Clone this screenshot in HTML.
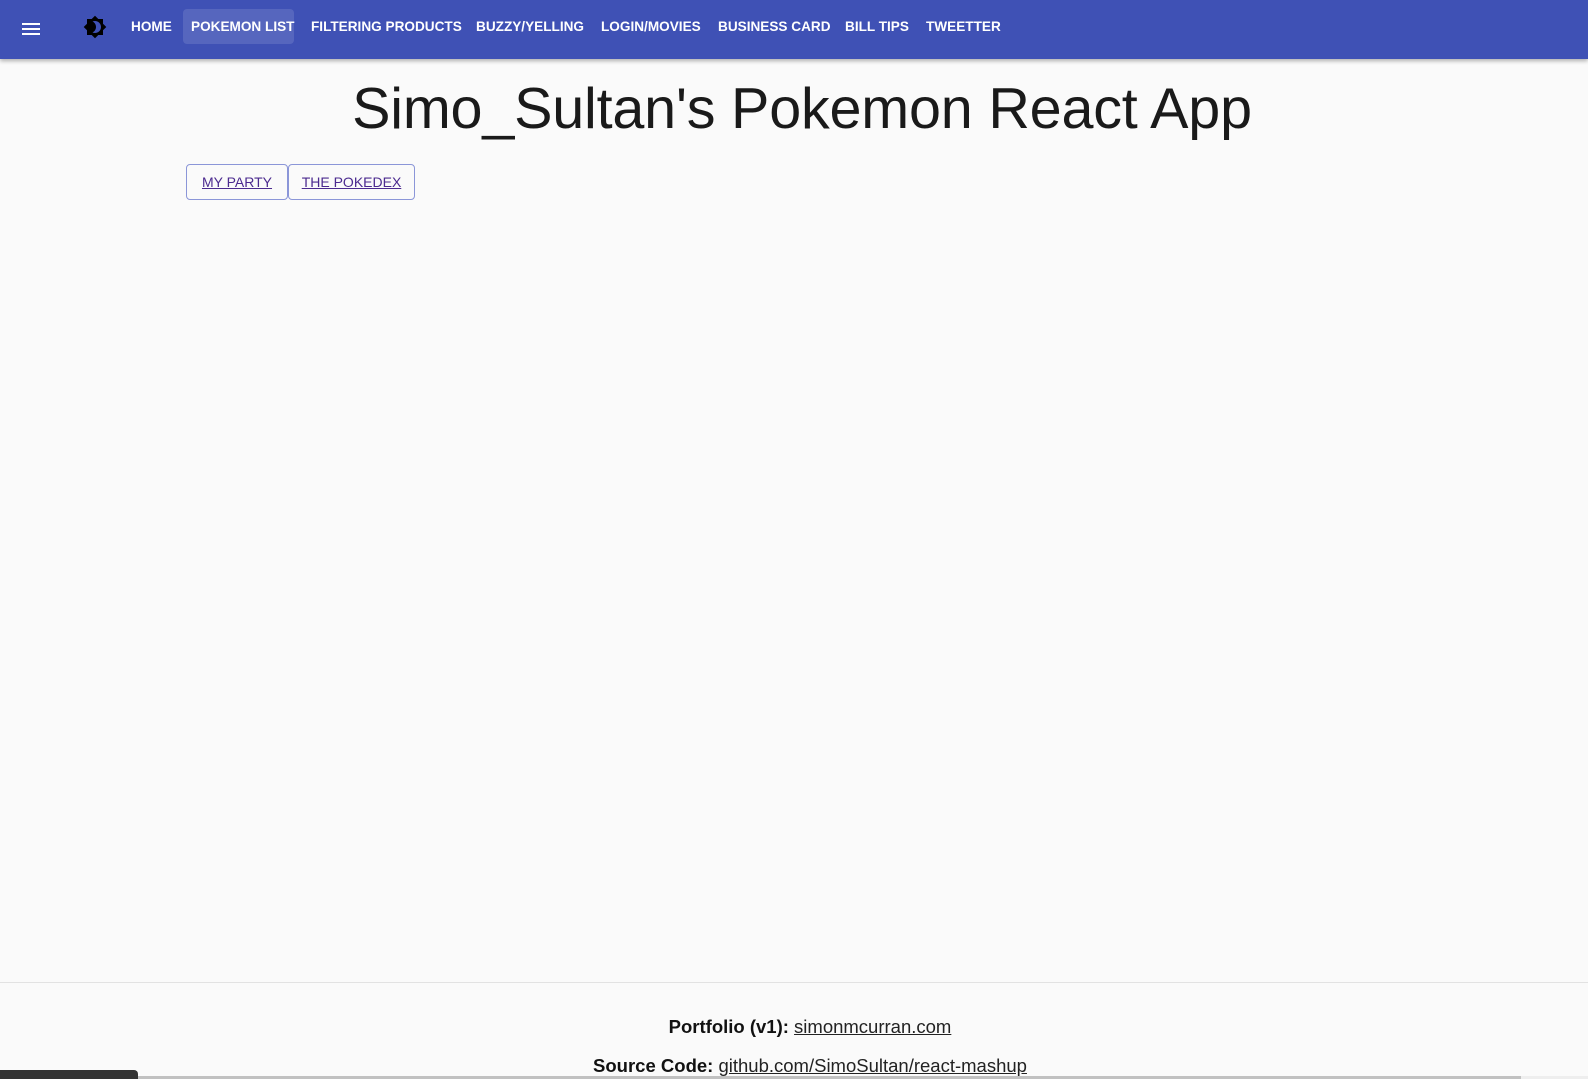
<!DOCTYPE html>
<html><head><style>
*{margin:0;padding:0;box-sizing:border-box}
body{width:1588px;height:1079px;overflow:hidden;background:#fafafa;font-family:"Liberation Sans",sans-serif;position:relative}
.nav{position:absolute;left:0;top:0;width:1588px;height:59px;background:#3f51b5;box-shadow:0 2px 4px rgba(0,0,0,.3)}
.nav a{position:absolute;top:19px;color:#fff;font-weight:bold;font-size:13.6px;text-decoration:none;white-space:nowrap}
.hover{position:absolute;left:183px;top:9px;width:111px;height:35px;background:rgba(255,255,255,.12);border-radius:4px}
h1{position:absolute;left:0;width:1604px;text-align:center;top:76px;font-weight:300;font-size:57.5px;color:#1a1a1a;letter-spacing:-0.2px}
.btn{position:absolute;top:164px;height:36px;border:1px solid #8b96d8;border-radius:4px;color:#4b2a8f;font-size:14px;text-decoration:underline;display:flex;align-items:center;justify-content:center;background:#fafafa}
.line{position:absolute;left:0;top:982px;width:1588px;border-top:1px solid #e2e2e2}
.f{position:absolute;left:0;width:1620px;text-align:center;font-size:18.5px;color:#111}
.f b{font-weight:bold}.f u{color:#222}
</style></head><body>
<div class="nav">
<svg style="position:absolute;left:21px;top:20px" width="20" height="16" viewBox="0 0 20 16"><rect x="1" y="3" width="18" height="2" fill="#fff"/><rect x="1" y="8" width="18" height="2" fill="#fff"/><rect x="1" y="13" width="18" height="2" fill="#fff"/></svg>
<svg style="position:absolute;left:83px;top:15px" width="24" height="24" viewBox="0 0 24 24"><path d="M20 8.69V4h-4.69L12 .69 8.69 4H4v4.69L.69 12 4 15.31V20h4.69L12 23.31 15.31 20H20v-4.69L23.31 12 20 8.69zM12 18c-.89 0-1.74-.2-2.5-.55C11.56 16.5 13 14.42 13 12s-1.44-4.5-3.5-5.45C10.26 6.2 11.11 6 12 6c3.31 0 6 2.69 6 6s-2.69 6-6 6z" fill="#000"/></svg>
<div class="hover"></div>
<a style="left:131px">HOME</a>
<a style="left:191px">POKEMON LIST</a>
<a style="left:311px">FILTERING PRODUCTS</a>
<a style="left:476px">BUZZY/YELLING</a>
<a style="left:601px">LOGIN/MOVIES</a>
<a style="left:718px">BUSINESS CARD</a>
<a style="left:845px">BILL TIPS</a>
<a style="left:926px">TWEETTER</a>
</div>
<h1>Simo_Sultan's Pokemon React App</h1>
<div class="btn" style="left:186px;width:102px">MY PARTY</div>
<div class="btn" style="left:288px;width:127px">THE POKEDEX</div>
<div class="line"></div>
<div class="f" style="top:1016px"><b>Portfolio (v1):</b> <u>simonmcurran.com</u></div>
<div class="f" style="top:1055px"><b>Source Code:</b> <u>github.com/SimoSultan/react-mashup</u></div>
<div style="position:absolute;left:0;top:1076px;width:1588px;height:3px;background:#eee"></div>
<div style="position:absolute;left:0;top:1076px;width:1521px;height:3px;background:#c1c1c1"></div>
<div style="position:absolute;left:0;top:1070px;width:138px;height:9px;background:#333;border-radius:0 4px 0 0"></div>
</body></html>
